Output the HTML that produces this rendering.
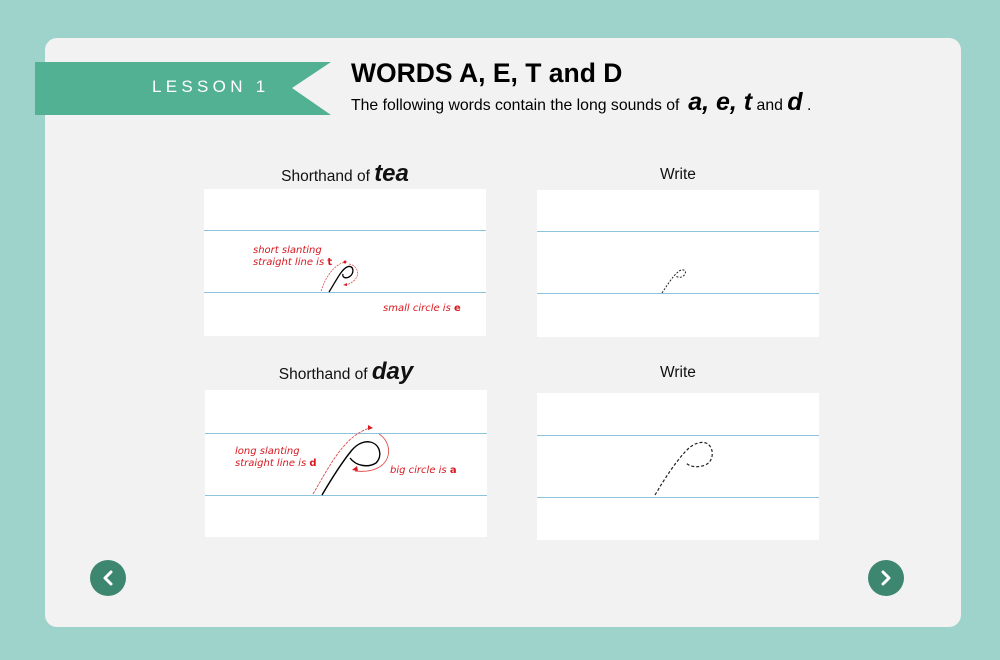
<!DOCTYPE html>
<html><head><meta charset="utf-8">
<style>
*{margin:0;padding:0;box-sizing:border-box}
body{width:1000px;height:660px;background:#9dd3cb;position:relative;overflow:hidden;font-family:"Liberation Sans",Arial,sans-serif}
.card{position:absolute;left:45px;top:38px;width:916px;height:589px;background:#f2f2f2;border-radius:12px}
.box{position:absolute;background:#fff;width:282px;height:147px}
.ln{position:absolute;left:0;right:0;height:1px;background:#8cc3dd}
.lbl{position:absolute;font-size:15.5px;color:#111;text-align:center;width:282px}
.lbl b{font-size:24px;font-style:italic;font-weight:bold}
.red{position:absolute;color:#d71920;font-size:10px;font-style:italic;line-height:12px;font-family:"DejaVu Sans",sans-serif}
.btn{position:absolute;width:36px;height:36px;border-radius:50%;background:#3d8670}
svg{position:absolute;left:0;top:0}
</style></head><body>
<div class="card"></div>
<svg width="1000" height="660">
<polygon points="35,62 331,62 292,88 331,115 35,115" fill="#52b192"/>
</svg>
<div style="position:absolute;left:152px;top:77px;color:#fff;font-size:17px;letter-spacing:4.3px">LESSON 1</div>
<div style="position:absolute;left:351px;top:58px;font-size:26.5px;font-weight:bold;color:#000">WORDS A, E, T and D</div>
<div style="position:absolute;left:351px;top:88px;font-size:15.8px;color:#000;white-space:nowrap">The following words contain the long sounds of &nbsp;<b style="font-size:25px;font-style:italic">a, e, t</b> and <b style="font-size:25px;font-style:italic">d</b> .</div>

<div class="lbl" style="left:204px;top:160px">Shorthand of <b>tea</b></div>
<div class="lbl" style="left:537px;top:166px">Write</div>
<div class="lbl" style="left:205px;top:358px">Shorthand of <b>day</b></div>
<div class="lbl" style="left:537px;top:364px">Write</div>

<div class="box" style="left:204px;top:189px"><div class="ln" style="top:41px"></div><div class="ln" style="top:103px"></div></div>
<div class="box" style="left:537px;top:190px"><div class="ln" style="top:41px"></div><div class="ln" style="top:103px"></div></div>
<div class="box" style="left:205px;top:390px"><div class="ln" style="top:43px"></div><div class="ln" style="top:105px"></div></div>
<div class="box" style="left:537px;top:393px"><div class="ln" style="top:42px"></div><div class="ln" style="top:104px"></div></div>

<div class="red" style="left:253px;top:245px">short slanting<br>straight line is <b style="font-style:normal">t</b></div>
<div class="red" style="left:383px;top:303px">small circle is <b style="font-style:normal">e</b></div>
<div class="red" style="left:235px;top:446px">long slanting<br>straight line is <b style="font-style:normal">d</b></div>
<div class="red" style="left:390px;top:465px">big circle is <b style="font-style:normal">a</b></div>

<svg width="1000" height="660" fill="none">
<path d="M329,292 C336,281 341,270 347,267 C354,264 355,274 349,277 C345,279 342,277 343,274" stroke="#000" stroke-width="1.3"/>
<path d="M321,291 C326,276 334,265 345,262" stroke="#e05050" stroke-width="0.8" stroke-dasharray="2,1"/>
<path d="M349,264 C360,266 362,280 346,285" stroke="#e05050" stroke-width="0.8" stroke-dasharray="2,1"/>
<circle cx="345" cy="262" r="1.5" fill="#d71920"/>
<path d="M343,285 l4,-2 l0,3z" fill="#d71920"/>
<path d="M322,495 C332,478 342,462 352,450 C358,443 365,441 370,442 C380,444 383,456 376,463 C368,468 356,466 350,458" stroke="#000" stroke-width="1.4"/>
<path d="M313,494 C330,465 345,435 370,428" stroke="#e05050" stroke-width="0.9" stroke-dasharray="3,1"/>
<path d="M373,428 l-5,-3 l0,5z" fill="#d71920"/>
<path d="M379,434 C396,445 392,475 355,471" stroke="#e05050" stroke-width="0.9"/>
<path d="M352,470 l5,-4 l1,5z" fill="#d71920"/>
<path d="M662,293 C668,284 673,276 678,272 C682,268 687,270 685,274 C683,278 678,278 676,276" stroke="#222" stroke-width="1" stroke-dasharray="2,1.5"/>
<path d="M655,495 C665,478 675,463 685,452 C692,444 700,441 706,443 C715,447 714,462 705,465 C698,468 690,467 686,463" stroke="#222" stroke-width="1.2" stroke-dasharray="3,2"/>
</svg>

<div class="btn" style="left:90px;top:560px"></div>
<div class="btn" style="left:868px;top:560px"></div>
<svg width="1000" height="660" fill="none" stroke="#fff" stroke-width="3" stroke-linecap="round" stroke-linejoin="round">
<path d="M111,572 L105,578 L111,584"/>
<path d="M883,572 L889,578 L883,584"/>
</svg>
</body></html>
